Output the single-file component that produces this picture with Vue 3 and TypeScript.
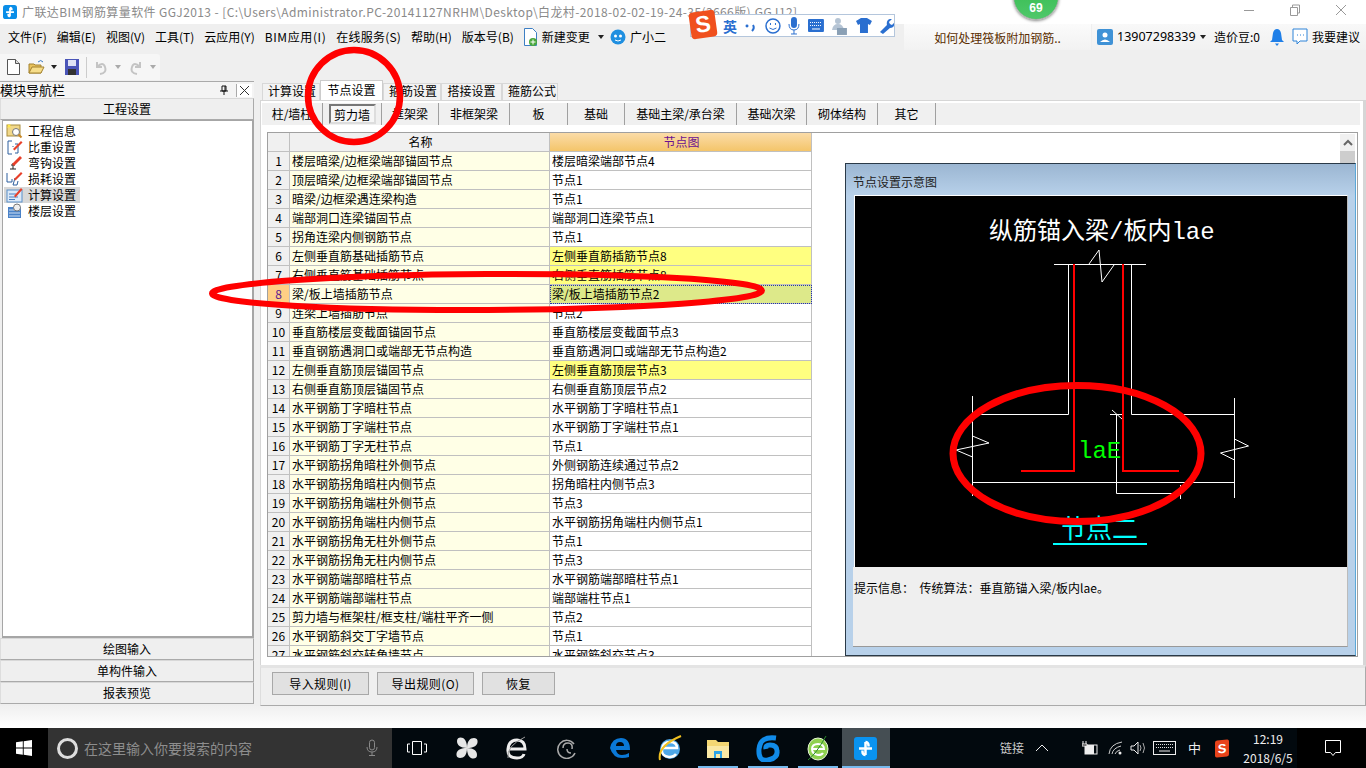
<script setup lang="ts">
interface Row { name: string; node: string; state?: "warn" | "sel" }

const menus: string[] = ["文件(F)", "编辑(E)", "视图(V)", "工具(T)", "云应用(Y)", "BIM应用(I)", "在线服务(S)", "帮助(H)", "版本号(B)"];
const tabs: string[] = ["计算设置", "节点设置", "箍筋设置", "搭接设置", "箍筋公式"];
const subTabs: { label: string; width: number; pressed?: boolean }[] = [
  { label: "柱/墙柱", width: 61 },
  { label: "剪力墙", width: 59, pressed: true },
  { label: "框架梁", width: 57 },
  { label: "非框架梁", width: 71 },
  { label: "板", width: 58 },
  { label: "基础", width: 57 },
  { label: "基础主梁/承台梁", width: 112 },
  { label: "基础次梁", width: 70 },
  { label: "砌体结构", width: 71 },
  { label: "其它", width: 58 },
];
const rows: Row[] = [
  { name: "楼层暗梁/边框梁端部锚固节点", node: "楼层暗梁端部节点4" },
  { name: "顶层暗梁/边框梁端部锚固节点", node: "节点1" },
  { name: "暗梁/边框梁遇连梁构造", node: "节点1" },
  { name: "端部洞口连梁锚固节点", node: "端部洞口连梁节点1" },
  { name: "拐角连梁内侧钢筋节点", node: "节点1" },
  { name: "左侧垂直筋基础插筋节点", node: "左侧垂直筋插筋节点8", state: "warn" },
  { name: "右侧垂直筋基础插筋节点", node: "右侧垂直筋插筋节点8", state: "warn" },
  { name: "梁/板上墙插筋节点", node: "梁/板上墙插筋节点2", state: "sel" },
  { name: "连梁上墙插筋节点", node: "节点2" },
  { name: "垂直筋楼层变截面锚固节点", node: "垂直筋楼层变截面节点3" },
  { name: "垂直钢筋遇洞口或端部无节点构造", node: "垂直筋遇洞口或端部无节点构造2" },
  { name: "左侧垂直筋顶层锚固节点", node: "左侧垂直筋顶层节点3", state: "warn" },
  { name: "右侧垂直筋顶层锚固节点", node: "右侧垂直筋顶层节点2" },
  { name: "水平钢筋丁字暗柱节点", node: "水平钢筋丁字暗柱节点1" },
  { name: "水平钢筋丁字端柱节点", node: "水平钢筋丁字端柱节点1" },
  { name: "水平钢筋丁字无柱节点", node: "节点1" },
  { name: "水平钢筋拐角暗柱外侧节点", node: "外侧钢筋连续通过节点2" },
  { name: "水平钢筋拐角暗柱内侧节点", node: "拐角暗柱内侧节点3" },
  { name: "水平钢筋拐角端柱外侧节点", node: "节点3" },
  { name: "水平钢筋拐角端柱内侧节点", node: "水平钢筋拐角端柱内侧节点1" },
  { name: "水平钢筋拐角无柱外侧节点", node: "节点1" },
  { name: "水平钢筋拐角无柱内侧节点", node: "节点3" },
  { name: "水平钢筋端部暗柱节点", node: "水平钢筋端部暗柱节点1" },
  { name: "水平钢筋端部端柱节点", node: "端部端柱节点1" },
  { name: "剪力墙与框架柱/框支柱/端柱平齐一侧", node: "节点2" },
  { name: "水平钢筋斜交丁字墙节点", node: "节点1" },
  { name: "水平钢筋斜交转角墙节点", node: "水平钢筋斜交节点3" },
];
const navItems: { label: string; active?: boolean }[] = [
  { label: "工程信息" }, { label: "比重设置" }, { label: "弯钩设置" },
  { label: "损耗设置" }, { label: "计算设置", active: true }, { label: "楼层设置" },
];
</script>

<template>
  <div class="screen">
    <header class="titlebar">
      <svg class="app-logo" viewBox="0 0 16 16"><rect width="16" height="16" rx="3" fill="#0a8ee8"/><path d="M8 3v10M3.5 8h9M8 3a2 2 0 0 1 2 2v1M8 13a2 2 0 0 1-2-2v-1" stroke="#fff" stroke-width="2" fill="none"/></svg>
      <span class="title-text">广联达BIM钢筋算量软件 GGJ2013 - [C:\Users\Administrator.PC-20141127NRHM\Desktop\白龙村-2018-02-02-19-24-35(3666版).GGJ12]</span>
      <div class="win-ctrl">
        <svg width="12" height="12" viewBox="0 0 12 12"><path d="M1 6.5h10" stroke="#999"/></svg>
        <svg width="12" height="12" viewBox="0 0 12 12"><path d="M1.500 3.500h7v8h-7zM3.500 3.500v-2.500h7v8h-2" stroke="#999" fill="none"/></svg>
        <svg width="12" height="12" viewBox="0 0 12 12"><path d="M1 1l10 10M11 1L1 11" stroke="#999"/></svg>
      </div>
    </header>

    <nav class="menubar">
      <span v-for="m in menus" :key="m" class="menu-item">{{ m }}</span>
      <svg class="mi-doc" width="15" height="20" viewBox="0 0 15 20"><path d="M1.500 1.500h8l4 4v13h-12z" fill="#fff" stroke="#3d7fc4"/><circle cx="10" cy="15" r="4" fill="#4aa83c"/><path d="M10 12.500v5M7.500 15h5" stroke="#fff"/></svg>
      <span class="menu-item mi-new">新建变更</span>
      <span class="caret mi-caret"></span>
      <svg class="mi-bot" width="16" height="16" viewBox="0 0 16 16"><circle cx="8" cy="8" r="7.500" fill="#1f8fe0"/><circle cx="5.500" cy="7" r="1.500" fill="#fff"/><circle cx="10.500" cy="7" r="1.500" fill="#fff"/><path d="M5 11q3 2 6 0" stroke="#fff" fill="none"/></svg>
      <span class="menu-item mi-bot-text">广小二</span>
      <div class="question">如何处理筏板附加钢筋..</div>
      <div class="account">
        <svg width="16" height="16" viewBox="0 0 16 16"><rect width="16" height="16" rx="2" fill="#3f92d6"/><circle cx="8" cy="6" r="2.500" fill="#fff"/><path d="M3 13q5-5 10 0z" fill="#fff"/></svg>
        <span class="phone">13907298339</span>
        <span class="caret ac-caret"></span>
        <span class="beans">造价豆:0</span>
        <svg class="bell" width="14" height="18" viewBox="0 0 14 18"><path d="M7 1q3 0 4 4l1 7 2 2H0l2-2 1-7q1-4 4-4z" fill="#1f7fe8"/><path d="M5 15.500h4L7 18z" fill="#1f7fe8"/></svg>
        <svg class="chat" width="16" height="18" viewBox="0 0 16 18"><path d="M1 1h14v12H8l-3 3v-3H1z" fill="#fff" stroke="#2f84d8"/><path d="M5 7h1M8 7h1M11 7h1" stroke="#2f84d8"/></svg>
        <span class="advice">我要建议</span>
      </div>
    </nav>

    <div class="toolbar">
      <div class="tool-group">
        <svg class="t-new" width="13" height="16" viewBox="0 0 13 16"><path d="M.5.500h8l4 4v11H.5z" fill="#fff" stroke="#555"/><path d="M8.500.500v4h4" fill="#ddd" stroke="#555"/></svg>
        <svg class="t-open" width="17" height="16" viewBox="0 0 17 16"><path d="M1 14V5h5l1 1h6v8z" fill="#e8c25c" stroke="#a38230"/><path d="M1 14l3-6h12l-3 6z" fill="#f6dd8a" stroke="#a38230"/><path d="M10 3q3-3 5 0" stroke="#3979c4" fill="none"/></svg>
        <span class="caret t-caret"></span>
        <svg class="t-save" width="14" height="16" viewBox="0 0 14 16"><rect width="14" height="16" fill="#4a55b8"/><rect x="3" y="1" width="8" height="6" fill="#dfe3f5"/><rect x="3" y="10" width="8" height="6" fill="#333"/></svg>
        <span class="t-sep"></span>
        <svg class="t-undo" width="12" height="15" viewBox="0 0 12 15"><path d="M2 2v5h5M2 7q6-6 8 0t-5 7" stroke="#c4c4c4" stroke-width="2" fill="none"/></svg>
        <span class="caret t-caret2 dim"></span>
        <svg class="t-redo" width="12" height="15" viewBox="0 0 12 15"><path d="M10 2v5H5M10 7Q4 1 2 7t5 7" stroke="#c4c4c4" stroke-width="2" fill="none"/></svg>
        <span class="caret t-caret3 dim"></span>
      </div>
    </div>

    <main class="workspace">
      <aside class="sidebar">
        <div class="nav-head">
          <span>模块导航栏</span>
          <svg class="pin" width="10" height="10" viewBox="0 0 10 10"><path d="M3 1h4v5H3zM1 6h8M5 6v4M6 1v5" stroke="#111" fill="none"/></svg>
          <span class="close-x">
            <svg width="9" height="9" viewBox="0 0 9 9"><path d="M0 0l9 9M9 0L0 9" stroke="#333"/></svg>
          </span>
        </div>
        <div class="side-btn">工程设置</div>
        <ul class="nav-list">
          <li v-for="(n, i) in navItems" :key="n.label" class="nav-row">
            <svg class="nav-icon" width="17" height="16" viewBox="0 0 17 16">
              <g v-if="i === 0"><rect x="1" y="2" width="13" height="11" fill="#f1d88a" stroke="#a88c3c"/><path d="M1 1l2 1 2-1-1 2 1 2-2-1-2 1 1-2z" fill="#ffe94a"/><circle cx="10" cy="9" r="3.500" fill="#fff" stroke="#777"/><path d="M12.500 11.500l3 3" stroke="#c98a28" stroke-width="2"/></g>
              <g v-else-if="i === 1"><path d="M6 2H2v13h4M7 7v1M9 5h3v9H9" stroke="#2d5f9e" fill="none"/><path d="M7 10l8-8 1.500 1.500-8 8z" fill="#e8402a"/></g>
              <g v-else-if="i === 2"><path d="M7 8v6M4 14h6M5 10h4" stroke="#222" fill="none"/><path d="M6 9l8-8 2 2-8 8z" fill="#e8402a"/></g>
              <g v-else-if="i === 3"><path d="M1 2v9h5V8M9 7l-2 7h4l1-4" stroke="#2d5f9e" fill="none"/><path d="M8 8l7-7 1.500 1.500-7 7z" fill="#e8402a"/></g>
              <g v-else-if="i === 4"><rect x="1" y="3" width="15" height="12" fill="#dbe9f8" stroke="#5a8fc8"/><path d="M3 7h7M3 10h9M3 12.500h6" stroke="#4a7fc0"/><path d="M8 9l7-8 1.500 1.500-7 8z" fill="#e8402a"/></g>
              <g v-else><path d="M2 4h13v11H2z" fill="#4a82c8"/><path d="M3 7h11M3 10h11M3 13h11" stroke="#cfe0f4"/><circle cx="11" cy="4.500" r="3.500" fill="#eee" stroke="#777"/></g>
            </svg>
            <span class="nav-label" :class="{ active: n.active }">{{ n.label }}</span>
          </li>
        </ul>
        <div class="side-btn">绘图输入</div>
        <div class="side-btn">单构件输入</div>
        <div class="side-btn">报表预览</div>
      </aside>

      <section class="content">
        <div class="tabs">
          <span v-for="(t, i) in tabs" :key="t" class="tab" :class="{ on: i === 1 }">{{ t }}</span>
        </div>
        <div class="tab-panel">
          <div class="subtabs">
            <span v-for="s in subTabs" :key="s.label" class="subtab" :style="{ width: s.width + 'px' }">
              <span :class="{ pressed: s.pressed }">{{ s.label }}</span>
            </span>
          </div>
          <div class="grid-frame">
            <div class="table">
              <div class="tr head">
                <span class="c-i"></span>
                <span class="c-n">名称</span>
                <span class="c-p hot">节点图</span>
              </div>
              <div v-for="(r, i) in rows" :key="i" class="tr">
                <span class="c-i" :class="{ cur: r.state === 'sel' }">{{ i + 1 }}</span>
                <span class="c-n cream">{{ r.name }}</span>
                <span class="c-p" :class="r.state">{{ r.node }}</span>
              </div>
            </div>
            <div class="scrollbar">
              <span class="sb-btn"><svg width="10" height="7" viewBox="0 0 10 7"><path d="M1 6l4-4 4 4" stroke="#666" stroke-width="2" fill="none"/></svg></span>
              <span class="sb-thumb"></span>
            </div>
            <div class="preview">
              <div class="preview-title">节点设置示意图</div>
              <svg class="drawing" viewBox="855 196 492 371">
                <rect x="855" y="196" width="492" height="371" fill="#000"/>
                <text x="989" y="239" class="d-title">纵筋锚入梁/板内lae</text>
                <g fill="none" stroke="#fff" stroke-width="1">
                  <path d="M1054 264.500h92M1068.500 264.500v150H972.500M1131.500 264.500v150H1234.500"/>
                  <path d="M972.500 396v100M1234.500 398v100M972.500 482.500h262"/>
                  <path d="M1116.500 414.500V493.500H1180M1180.500 485v14M1110 414.500h13M1112 410l10 9"/>
                  <path d="M1089 264l10-14 3 32 12-17"/>
                  <path d="M972.500 436l16.500 7-33 7 16.500 7M1234.500 439l14 7-28 7 14 7"/>
                </g>
                <path d="M1074 264V471H1021M1123 264V471H1179" fill="none" stroke="#f00" stroke-width="2"/>
                <text x="1078" y="458" class="d-lae">laE</text>
                <text x="1060" y="538" class="d-node">节点二</text>
                <path d="M1053 544h94" stroke="#0ff" stroke-width="2"/>
              </svg>
              <div class="preview-info">提示信息：&nbsp;&nbsp;传统算法：垂直筋锚入梁/板内lae。</div>
            </div>
          </div>
        </div>
        <div class="actions">
          <button class="act a1">导入规则(I)</button>
          <button class="act a2">导出规则(O)</button>
          <button class="act a3">恢复</button>
        </div>
      </section>
    </main>
    <div class="strip"></div>

    <footer class="taskbar">
      <div class="start">
        <svg width="16" height="16" viewBox="0 0 16 16"><path d="M0 2.300l6.800-1v6.300H0zM7.700 1.200L16 0v7.600H7.700zM0 8.400h6.800v6.300l-6.800-1zM7.700 8.400H16V16l-8.300-1.200z" fill="#fff"/></svg>
      </div>
      <div class="search">
        <span class="cortana"></span>
        <span class="search-text">在这里输入你要搜索的内容</span>
        <svg class="mic" width="12" height="18" viewBox="0 0 12 18"><rect x="3.500" y="1" width="5" height="10" rx="2.500" fill="none" stroke="#8a8a8a"/><path d="M1 8q0 5 5 5t5-5M6 13v3M3 16.500h6" fill="none" stroke="#8a8a8a"/></svg>
      </div>
      <div class="task-icons">
        <span class="tk"><svg width="20" height="16" viewBox="0 0 20 16"><path d="M5.500 1.500h9v13h-9zM3 4H.5v8H3M17 4h2.500v8H17" fill="none" stroke="#fff"/></svg></span>
        <span class="tk"><svg width="24" height="24" viewBox="0 0 24 24"><g fill="#e6e6e6"><path d="M12 12C5 12 2 9 2 5s4-4 6-3 4 4 4 10z"/><path d="M12 12c0-7 3-10 7-10s4 4 3 6-4 4-10 4z"/><path d="M12 12c7 0 10 3 10 7s-4 4-6 3-4-4-4-10z"/><path d="M12 12c0 7-3 10-7 10s-4-4-3-6 4-4 10-4z"/></g></svg></span>
        <span class="tk"><svg width="24" height="28" viewBox="0 0 24 28"><path d="M4 15h16q0-9-8-9t-9 9 9 9q6 0 7-4" fill="none" stroke="#eee" stroke-width="3"/><path d="M3 24Q1 12 20 3" fill="none" stroke="#999"/></svg></span>
        <span class="tk"><svg width="22" height="22" viewBox="0 0 22 22"><path d="M18 7a9 9 0 1 0 1 9M7 11q0-5 5-5t4 6M11 12q0 4 4 4" fill="none" stroke="#aaa" stroke-width="1.500"/></svg></span>
        <span class="tk nudge"><svg width="22" height="22" viewBox="0 0 22 22"><path d="M1 11q2-10 11-10t9 12H7q1 5 6 5 4 0 7-2v4q-3 1-7 1-9 0-12-10zM7 9h8q0-4-4-4T7 9z" fill="#0a78d7"/></svg></span>
        <span class="tk nudge"><svg width="26" height="28" viewBox="0 0 26 28"><ellipse cx="13" cy="15" rx="10" ry="10" fill="#4ea7e8"/><path d="M6 14h14q0-6-7-6t-8 7 7 8q5 0 7-3" fill="none" stroke="#fff" stroke-width="2.500"/><path d="M3 26Q0 12 24 2" fill="none" stroke="#f0c020" stroke-width="2"/></svg></span>
        <span class="tk lit"><svg width="24" height="22" viewBox="0 0 24 22"><path d="M1 3h9l2 2h11v16H1z" fill="#f4d773"/><path d="M1 9h22v12H1z" fill="#fbe9a4"/><path d="M8 14h8v7h-2v-4h-4v4H8z" fill="#2ea3e6"/></svg></span>
        <span class="tk lit"><svg width="24" height="28" viewBox="0 0 24 28"><path d="M20 4Q4 2 3 15t9 11 9-9q0-6-7-6-5 0-4 4" fill="none" stroke="#118be8" stroke-width="5"/></svg></span>
        <span class="tk lit"><svg width="24" height="28" viewBox="0 0 24 28"><ellipse cx="12" cy="15" rx="10" ry="11" fill="#8fd14f" stroke="#e8f6d6"/><path d="M6 15h12q0-5-6-5t-6 5 6 6q4 0 5-2" fill="none" stroke="#fff" stroke-width="2"/><path d="M2 26q8-6 18-24" fill="none" stroke="#2a8a2a"/></svg></span>
        <span class="tk active"><svg width="23" height="23" viewBox="0 0 23 23"><rect width="23" height="23" rx="3" fill="#0a93f0"/><path d="M11.500 5v13M5 11.500h13M11.500 5a3 3 0 0 1 3 3v1.500M11.500 18a3 3 0 0 1-3-3v-1.500" stroke="#fff" stroke-width="2.500" fill="none"/></svg></span>
      </div>
      <div class="tray">
        <span class="tray-text">链接</span>
        <svg class="tr-up" width="14" height="8" viewBox="0 0 14 8"><path d="M1 7l6-6 6 6" stroke="#eee" fill="none"/></svg>
        <svg class="tr-bat" width="17" height="14" viewBox="0 0 17 14"><rect x="3" y="4" width="12" height="9" fill="none" stroke="#eee"/><rect x="3" y="4" width="9" height="9" fill="#eee"/><path d="M1 0v3M4 0v3M0 3h5v2H0z" stroke="#eee"/></svg>
        <svg class="tr-wifi" width="15" height="14" viewBox="0 0 15 14"><path d="M1 13Q2 3 14 1M4 13q1-6 9-8M7 13q1-3 5-4" stroke="#ccc" fill="none"/><circle cx="12" cy="12" r="1.500" fill="#eee"/></svg>
        <svg class="tr-vol" width="16" height="14" viewBox="0 0 16 14"><path d="M1 5h3l4-4v12l-4-4H1z" fill="none" stroke="#eee"/><path d="M10 4q2 3 0 6M13 2q3 5 0 10" stroke="#aaa" fill="none"/></svg>
        <svg class="tr-kbd" width="23" height="14" viewBox="0 0 23 14"><rect x=".5" y=".5" width="22" height="13" fill="none" stroke="#eee"/><path d="M3 3.500h17M3 6.500h17" stroke="#ddd" stroke-dasharray="1 1"/><path d="M6 10h11" stroke="#eee"/></svg>
        <span class="tr-zh">中</span>
        <span class="tr-s">S</span>
        <div class="clock"><span>12:19</span><span>2018/6/5</span></div>
        <svg class="tr-note" width="16" height="17" viewBox="0 0 16 17"><path d="M.5.500h15v12h-5l-2.500 3-2.500-3h-5z" fill="none" stroke="#fff"/></svg>
      </div>
    </footer>

    <div class="badge"><span>69</span></div>

    <div class="ime">
      <span class="ime-s">S</span>
      <span class="ime-en">英</span>
      <svg width="12" height="16" viewBox="0 0 12 16"><circle cx="2" cy="8" r="1.500" fill="#2a6fd0"/><path d="M8 7q2 3-1 6" stroke="#2a6fd0" stroke-width="2" fill="none"/></svg>
      <svg width="16" height="16" viewBox="0 0 16 16"><circle cx="8" cy="8" r="7" fill="none" stroke="#2a6fd0" stroke-width="1.500"/><path d="M5.500 5v2M10.500 5v2M4.500 10q3.500 3 7 0" stroke="#2a6fd0" fill="none"/></svg>
      <svg width="12" height="18" viewBox="0 0 12 18"><rect x="3" y="0" width="6" height="11" rx="3" fill="#2a6fd0"/><path d="M1 7q0 6 5 6t5-6M6 13v4M3 17h6" stroke="#2a6fd0" fill="none"/></svg>
      <svg width="16" height="13" viewBox="0 0 16 13"><rect width="16" height="13" rx="1" fill="#2a6fd0"/><path d="M2 3.500h12M2 6.500h12" stroke="#fff" stroke-dasharray="1 1"/><path d="M4 10h8" stroke="#fff"/></svg>
      <svg width="17" height="18" viewBox="0 0 17 18"><circle cx="7" cy="4" r="3" fill="#b5c4d4"/><path d="M1 13q1-6 6-6t6 6z" fill="#b5c4d4"/><rect x="6" y="11" width="10" height="7" fill="#8aa0b5"/></svg>
      <svg width="16" height="15" viewBox="0 0 16 15"><path d="M5 0h6l5 3-2 4-2-1v9H4V6L2 7 0 3z" fill="#2a6fd0"/></svg>
      <svg width="15" height="16" viewBox="0 0 15 16"><path d="M1 14l7-7q-1-5 3-6l2 0-3 3 1 2 2 1 2-2q1 5-4 5L4 16z" fill="#2a6fd0"/></svg>
    </div>

    <svg class="marks" width="1366" height="768" viewBox="0 0 1366 768">
      <g fill="none" stroke="#f00">
        <circle cx="354" cy="96" r="46" stroke-width="6.500"/>
        <ellipse cx="487" cy="292" rx="275" ry="18" stroke-width="6" transform="rotate(-.3 487 292)"/>
        <ellipse cx="1077" cy="453.500" rx="124" ry="68" stroke-width="7"/>
      </g>
    </svg>
  </div>
</template>

<style>
html, body { margin: 0; padding: 0; overflow: hidden; }
</style>

<style scoped>
.screen {
  position: relative; width: 1366px; height: 768px; overflow: hidden;
  display: flex; flex-direction: column; background: #efefef; color: #000;
  font: 12px/16px "Noto Sans CJK SC", "Liberation Sans", sans-serif;
}
.titlebar { height: 24px; flex: none; background: #fff; display: flex; align-items: center; padding-left: 3px; position: relative; }
.app-logo { width: 14px; height: 14px; margin-right: 5px; }
.title-text { color: #8a8a8a; white-space: nowrap; letter-spacing: .4px; }
.win-ctrl { position: absolute; right: 19px; top: 4px; width: 104px; display: flex; justify-content: space-between; }
.menubar { height: 26px; flex: none; display: flex; align-items: center; padding-left: 8px; gap: 10px; white-space: nowrap; }
.menu-item:nth-child(6) { letter-spacing: .6px; }
.menu-item:nth-child(7) { letter-spacing: .2px; }
.mi-doc { margin-left: -1px; }
.mi-new { margin-left: -6px; }
.caret { display: inline-block; width: 0; height: 0; border: 3px solid transparent; border-top: 4px solid #222; border-bottom: 0; }
.caret.dim { border-top-color: #aaa; }
.mi-caret { margin-left: -2px; }
.mi-bot { margin-left: -4px; }
.mi-bot-text { margin-left: -6px; }
.question { position: absolute; left: 904px; top: 24px; width: 187px; height: 26px; background: linear-gradient(#fbfbfb, #f2f2f2); color: #5a2d00; text-align: center; line-height: 27px; }
.account { position: absolute; left: 1092px; top: 24px; width: 274px; height: 26px; background: linear-gradient(#f8f8f8, #f1f1f1); display: flex; align-items: center; padding-left: 5px; box-sizing: border-box; }
.phone { margin-left: 4px; font-size: 12.5px; font-family: "Noto Sans", "Liberation Sans", sans-serif; width: 78px; }
.ac-caret { margin-left: 5px; }
.beans { margin-left: 8px; width: 47px; }
.bell { margin-left: 9px; }
.chat { margin-left: 8px; }
.advice { margin-left: 4px; }
.toolbar { height: 30px; flex: none; display: flex; align-items: flex-end; }
.tool-group { width: 160px; height: 26px; background: #f6f6f6; border-radius: 0 3px 0 0; display: flex; align-items: center; }
.t-new { margin-left: 7px; }
.t-open { margin-left: 8px; }
.t-caret { margin-left: 6px; }
.t-save { margin-left: 8px; }
.t-sep { width: 1px; height: 21px; background: #ccc; margin-left: 7px; }
.t-undo { margin-left: 8px; }
.t-caret2 { margin-left: 8px; }
.t-redo { margin-left: 9px; }
.t-caret3 { margin-left: 8px; }
.workspace { height: 626px; flex: none; display: flex; }
.sidebar { width: 254px; flex: none; display: flex; flex-direction: column; margin-right: 5px; padding-bottom: 2px; box-sizing: border-box; }
.nav-head { height: 16px; margin-top: 1px; border-top: 1px solid #aaa; background: #f4f4f4; display: flex; align-items: center; font-size: 13px; line-height: 14px; position: relative; overflow: hidden; }
.pin { margin-left: auto; margin-right: 7px; }
.close-x { width: 15px; height: 13px; background: #fff; display: flex; align-items: center; justify-content: center; margin-right: 2px; border-left: 1px solid #aaa; }
.side-btn { height: 22px; flex: none; box-sizing: border-box; border: 1px solid #aaa; border-top-color: #d8d8d8; border-left-color: #ddd; background: #efefef; text-align: center; line-height: 20px; font-size: 12px; }
.nav-list { flex: 1; margin: 0 0 0 2px; padding: 2px 0 0 1px; list-style: none; background: #fff; border: 2px solid #a6a6a6; border-width: 1px 2px 2px 1px; min-height: 0; }
.nav-row { height: 16px; display: flex; align-items: center; }
.nav-icon { flex: none; margin-right: 5px; margin-left: 2px; }
.nav-label { line-height: 16px; padding: 0 5px 0 0; }
.nav-row:has(.active) { background: linear-gradient(90deg, #d8d8d8 0, #d8d8d8 76px, transparent 76px); }
.content { flex: 1; min-width: 0; padding-left: 1px; display: flex; flex-direction: column; }
.tabs { height: 20px; flex: none; display: flex; align-items: flex-end; padding-left: 2px; }
.tab { height: 17px; line-height: 14px; padding: 0 5px; width: 58px; box-sizing: border-box; text-align: center; background: #f2f2f2; border: 1px solid #d8d8d8; border-bottom: 0; white-space: nowrap; }
.tab.on { height: 20px; line-height: 18px; width: 63px; background: #fff; border-color: #ccc; }
.tab:nth-child(4) { width: 61px; }
.tab:last-child { width: 56px; }
.tab-panel { height: 565px; flex: none; background: #fff; border: 1px solid #d6d6d6; border-width: 1px 3px 0 1px; box-sizing: border-box; padding: 2px 0 0 1px; position: relative; }
.subtabs { height: 22px; display: flex; background: #f0f0f0; margin-right: 3px; }
.subtab { height: 22px; box-sizing: border-box; border-right: 1px solid #a0a0a0; display: flex; align-items: center; justify-content: center; flex: none; }
.pressed { display: block; width: 47px; height: 20px; line-height: 18px; box-sizing: border-box; text-align: center; border: 2px solid; border-color: #777 #ddd #ddd #777; background: #f6f6f6; }
.grid-frame { position: absolute; left: 6px; top: 31px; right: 5px; height: 523px; background: #fff; border: 1px solid #a0a0a0; overflow: hidden; }
.table { width: 544px; }
.tr { display: flex; height: 19px; }
.tr > span { box-sizing: border-box; border-right: 1px solid #c0c0c0; border-bottom: 1px solid #c0c0c0; line-height: 18px; white-space: nowrap; overflow: hidden; padding-left: 2px; }
.c-i { width: 22px; background: #f0f0f0; text-align: center; padding-left: 0 !important; }
.c-n { width: 260px; }
.c-p { width: 262px; }
.head > span { text-align: center; background: #f0f0f0; }
.head > .hot { background: linear-gradient(#fbdca8, #f4c56a); color: #6b1090; }
.cream { background: #ffffe6; }
.warn { background: #ffff80; }
.sel { background: #dde98a; outline: 1px dotted #2233aa; outline-offset: -1px; }
.cur { background: #ffcf85; color: #5a1a90; }
.scrollbar { position: absolute; right: 2px; top: 1px; width: 15px; display: flex; flex-direction: column; }
.sb-btn { height: 17px; background: #f0f0f0; display: flex; align-items: center; justify-content: center; }
.sb-thumb { height: 40px; background: #cdcdcd; }
.preview { position: absolute; left: 577px; top: 30px; width: 511px; height: 493px; box-sizing: border-box; border: 1px solid #2a3a48; border-right-color: #5ba8d8; background: linear-gradient(#9bb6d2, #b8d1ea 32px); padding: 0 7px 8px; display: flex; flex-direction: column; }
.preview-title { height: 31px; flex: none; line-height: 35px; color: #222; }
.drawing { display: block; width: 492px; height: 371px; flex: none; border: 1px solid; border-color: #fff #bbb #999 #fff; box-sizing: content-box; margin-left: 1px; }
.preview-info { flex: 1; background: #efefef; border-bottom: 1px solid #999; border-right: 1px solid #bbb; padding: 13px 0 0 1px; line-height: 16px; margin-top: -1px; }
.d-title { font: 24px "Liberation Mono", "Noto Sans CJK SC", sans-serif; fill: #fff; }
.d-lae { font: 24px "Liberation Mono", monospace; fill: #0f0; }
.d-node { font: 26px "Noto Sans CJK SC", sans-serif; fill: #0ff; }
.actions { flex: 1; background: #efefef; border-bottom: 1px solid #aaa; border-left: 1px solid #ddd; border-right: 1px solid #aaa; border-top: 3px solid #e4e4e4; display: flex; align-items: flex-start; padding: 4px 0 0 11px; gap: 8px; }
.act { height: 23px; background: #e1e1e1; border: 1px solid #a8a8a8; font: 12px/16px "Noto Sans CJK SC", sans-serif; padding: 0; color: #000; letter-spacing: .4px; }
.a1 { width: 97px; }
.a2 { width: 97px; }
.a3 { width: 73px; }
.strip { height: 22px; flex: none; background: linear-gradient(#f0f0f0, #fff); }
.taskbar { height: 40px; flex: none; display: flex; background: linear-gradient(90deg, #02090e 1297px, #000 1297px); color: #eee; }
.start { width: 48px; background: #000; display: flex; align-items: center; justify-content: center; }
.search { width: 344px; background: #333; display: flex; align-items: center; position: relative; }
.cortana { margin-left: 9px; border: 3px solid #ddd; border-radius: 50%; box-sizing: border-box; width: 21px; height: 21px; }
.search-text { color: #8d8d8d; font-size: 14px; margin-left: 6px; }
.mic { position: absolute; right: 14px; top: 11px; }
.task-icons { display: flex; width: 498px; }
.tk { width: 50.100px; height: 40px; display: flex; align-items: center; justify-content: center; box-sizing: border-box; flex: none; }
.tk.nudge { padding-left: 5px; }
.tk.lit { background: linear-gradient(#76b9ed, #76b9ed) center bottom / 40px 2px no-repeat; }
.tk.active { background: linear-gradient(#76b9ed, #76b9ed) center bottom / 100% 2px no-repeat, #454e53; width: 48px; margin-left: -1px; }
.tray { flex: 1; display: flex; align-items: center; position: relative; white-space: nowrap; }
.tray-text { margin-left: 110px; color: #ccc; width: 24px; }
.tr-up { margin-left: 11px; }
.tr-bat { margin-left: 33px; }
.tr-wifi { margin-left: 9px; }
.tr-vol { margin-left: 7px; }
.tr-kbd { margin-left: 7px; }
.tr-zh { margin-left: 12px; font-size: 13px; width: 13px; }
.tr-s { margin-left: 14px; width: 14px; height: 17px; background: #e8431a; color: #fff; text-align: center; font: bold 13px/17px "Liberation Sans", sans-serif; transform: skewY(-6deg); border-radius: 2px; }
.clock { margin-left: 9px; display: flex; flex-direction: column; align-items: center; line-height: 19px; width: 60px; }
.tr-note { margin-left: 27px; }
.badge { position: absolute; left: 1013px; top: -26px; width: 44px; height: 44px; box-sizing: content-box; padding-bottom: 0; border-radius: 50%; background: linear-gradient(#2fb84a, #4fc86a); border: 1px solid #aaa; box-shadow: 0 1px 3px #888; display: flex; align-items: flex-end; justify-content: center; color: #fff; font: bold 12px/16px "Liberation Sans", sans-serif; }
.badge span { margin-bottom: 3px; }
.ime { position: absolute; left: 690px; top: 14px; width: 205px; height: 23px; box-sizing: border-box; background: #fff; border: 1px solid #b4c6dc; display: flex; align-items: center; gap: 7.500px; padding-left: 32px; }
.ime-s { position: absolute; left: -1px; top: -4px; width: 26px; height: 27px; background: #f0501e; color: #fff; border-radius: 4px; transform: rotate(-8deg); text-align: center; font: bold 23px/27px "Liberation Sans", sans-serif; }
.ime-en { color: #2a6fd0; font-weight: 700; font-size: 14px; width: 15px; }
.marks { position: absolute; inset: 0; pointer-events: none; }
</style>
